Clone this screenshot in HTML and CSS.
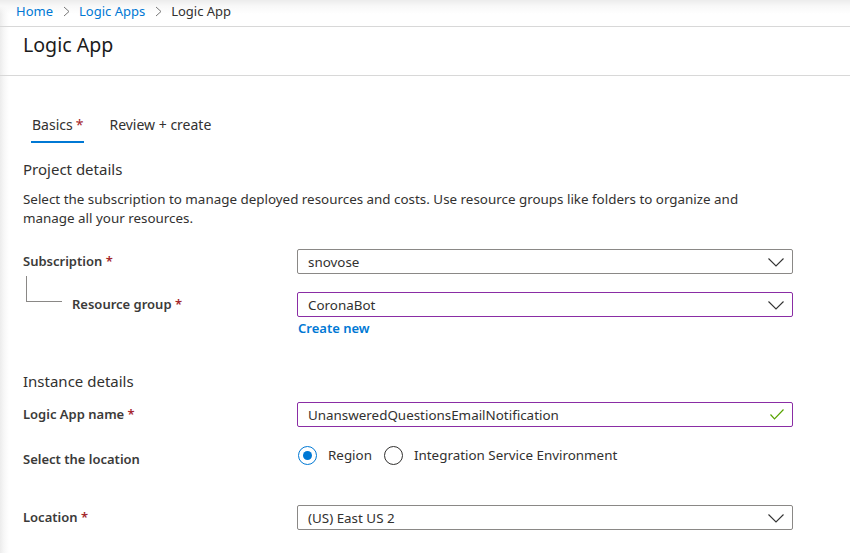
FILE: index.html
```html
<!DOCTYPE html>
<html>
<head>
<meta charset="utf-8">
<link rel="stylesheet" href="styles.css">
</head>
<body>
<div class="page">
  <nav class="crumbs">
    <a class="crumb-link">Home</a>
    <span class="sep"><svg width="7" height="11" viewBox="0 0 7 11"><polyline points="1,1 6,5.5 1,10" fill="none" stroke="#777" stroke-width="1"/></svg></span>
    <a class="crumb-link">Logic Apps</a>
    <span class="sep"><svg width="7" height="11" viewBox="0 0 7 11"><polyline points="1,1 6,5.5 1,10" fill="none" stroke="#777" stroke-width="1"/></svg></span>
    <span class="crumb-current">Logic App</span>
  </nav>
  <header class="title-bar">
    <h1 class="title">Logic App</h1>
  </header>
  <main class="content">
    <div class="tabs">
      <div class="tab active">Basics<span class="req">*</span></div>
      <div class="tab">Review + create</div>
    </div>

    <h2 class="section">Project details</h2>
    <p class="desc">Select the subscription to manage deployed resources and costs. Use resource groups like folders to organize and manage all your resources.</p>

    <div class="row row-sub">
      <div class="label">Subscription <span class="req">*</span></div>
      <div class="field select">
        <span>snovose</span>
        <svg class="chev" width="16" height="9" viewBox="0 0 16 9"><polyline points="0.5,0.5 8,8 15.5,0.5" fill="none" stroke="#333" stroke-width="1.1"/></svg>
      </div>
    </div>

    <div class="row row-rg">
      <div class="label sub-label">
        <span class="tree"></span>
        Resource group <span class="req">*</span>
      </div>
      <div>
        <div class="field select focus">
          <span>CoronaBot</span>
          <svg class="chev" width="16" height="9" viewBox="0 0 16 9"><polyline points="0.5,0.5 8,8 15.5,0.5" fill="none" stroke="#333" stroke-width="1.1"/></svg>
        </div>
        <a class="create">Create new</a>
      </div>
    </div>

    <h2 class="section section-inst">Instance details</h2>

    <div class="row row-name">
      <div class="label">Logic App name <span class="req">*</span></div>
      <div class="field focus">
        <span>UnansweredQuestionsEmailNotification</span>
        <svg class="check" width="14" height="11" viewBox="0 0 14 11"><polyline points="0.5,5.5 4.5,9.8 13.5,0.5" fill="none" stroke="#57a300" stroke-width="1.2"/></svg>
      </div>
    </div>

    <div class="row row-loc">
      <div class="label">Select the location</div>
      <div class="radios">
        <label class="radio"><span class="dot on"></span>Region</label>
        <label class="radio"><span class="dot"></span>Integration Service Environment</label>
      </div>
    </div>

    <div class="row row-location">
      <div class="label">Location <span class="req">*</span></div>
      <div class="field select">
        <span>(US) East US 2</span>
        <svg class="chev" width="16" height="9" viewBox="0 0 16 9"><polyline points="0.5,0.5 8,8 15.5,0.5" fill="none" stroke="#333" stroke-width="1.1"/></svg>
      </div>
    </div>
  </main>
</div>
</body>
</html>
```

FILE: styles.css
```css
* { box-sizing: border-box; }
html, body { margin: 0; padding: 0; }
body {
  font-family: "Segoe UI", "Noto Sans", "Open Sans", sans-serif;
  color: #323130;
  background: #fff;
  width: 850px;
  height: 553px;
  overflow: hidden;
}
.page {
  height: 553px;
  position: relative;
  background: linear-gradient(to right, #ececec 0, #f7f7f7 4px, #fff 9px);
}
.crumbs {
  height: 27px;
  display: flex;
  align-items: center;
  padding: 0 0 4px 16px;
  font-size: 13px;
  border-bottom: 1px solid #d8d8d8;
  background: linear-gradient(to bottom, #ececec 0, #f8f8f8 6px, rgba(255,255,255,0) 14px);
}
.crumb-link { color: #0078d4; }
.crumb-current { color: #323130; }
.sep { display: inline-flex; align-items: center; margin: 0 9px 0 10px; }
.title-bar {
  height: 49px;
  border-bottom: 1px solid #d8d8d8;
  padding: 5px 0 0 23px;
}
.title {
  margin: 0;
  font-size: 19.6px;
  font-weight: 400;
  color: #1b1b1b;
  line-height: 26px;
}
.content { padding: 0 0 0 23px; }
.tabs {
  display: flex;
  margin-top: 37px;
  padding-left: 8px;
  gap: 24px;
  height: 30px;
}
.tab {
  font-size: 14px;
  line-height: 20px;
  color: #323130;
  padding: 2px 1px 0;
  height: 30px;
}
.tab.active { border-bottom: 2px solid #0078d4; }
.tab .req { margin-left: 3px; }
.req { color: #a4262c; }
.section {
  margin: 15px 0 0 0;
  font-size: 15px;
  font-weight: 400;
  line-height: 22px;
  color: #323130;
}
.desc {
  margin: 10px 0 0 0;
  font-size: 13.4px;
  line-height: 19px;
  width: 760px;
  color: #323130;
}
.row {
  display: grid;
  grid-template-columns: 274px 496px;
  align-items: start;
}
.label {
  font-size: 13px;
  font-weight: 600;
  color: #3b3a39;
  line-height: 25px;
  position: relative;
}
.row-sub { margin-top: 21px; }
.row-rg { margin-top: 18px; }
.sub-label { padding-left: 49px; }
.tree {
  position: absolute;
  left: 3px;
  top: -16px;
  width: 36px;
  height: 26px;
  border-left: 1px solid #8a8886;
  border-bottom: 1px solid #8a8886;
}
.field {
  height: 25px;
  border: 1px solid #8a8886;
  border-radius: 2px;
  display: flex;
  align-items: center;
  justify-content: space-between;
  padding: 0 8px 0 10px;
  font-size: 13.4px;
  color: #323130;
}
.field.focus { border-color: #8a2da5; }
.chev { margin-top: 1px; }
.create {
  display: block;
  color: #0078d4;
  font-size: 13px;
  font-weight: 600;
  line-height: 20px;
  margin-top: 1px;
  padding-left: 1px;
}
.section-inst { margin-top: 32px; }
.row-name { margin-top: 10px; }
.row-loc { margin-top: 16px; }
.row-loc .label { line-height: 32px; }
.radios {
  display: flex;
  align-items: center;
  gap: 12px;
  padding-left: 1px;
  height: 24px;
}
.radio {
  display: flex;
  align-items: center;
  font-size: 13.4px;
  color: #323130;
}
.dot {
  width: 19px;
  height: 19px;
  border: 1px solid #323130;
  border-radius: 50%;
  margin-right: 11px;
  position: relative;
}
.dot.on { border-color: #0078d4; }
.dot.on::after {
  content: "";
  position: absolute;
  left: 4px; top: 4px;
  width: 9px; height: 9px;
  border-radius: 50%;
  background: #0078d4;
}
.row-location { margin-top: 30px; }
```
